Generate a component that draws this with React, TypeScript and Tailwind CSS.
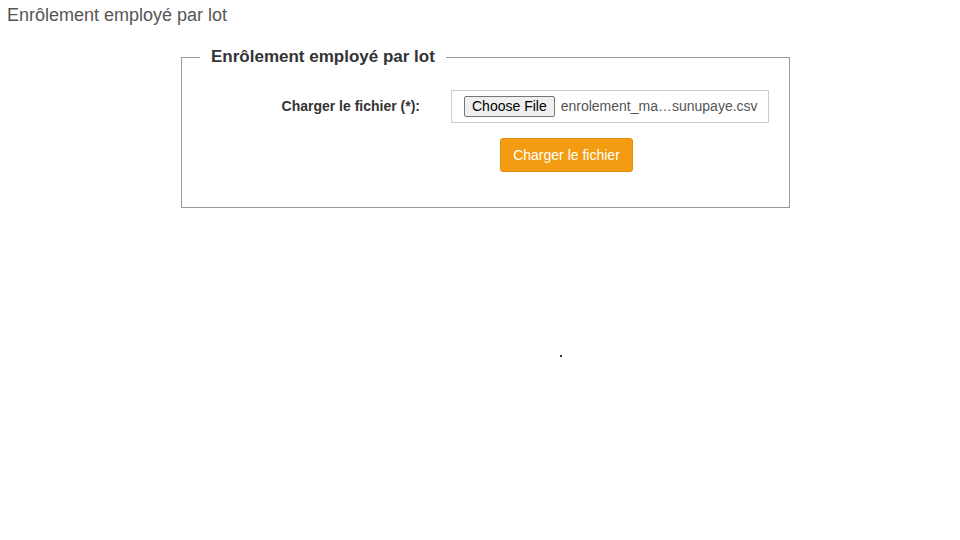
// Batch employee enrolment page: file picker inside a legend-titled fieldset.

const FONT = "font-['Liberation_Sans',Arial,sans-serif]";

function FakeFileInput({ fileName }: { readonly fileName: string }) {
    return (
        <div className="flex h-[33px] w-[318px] items-center border border-[#cccccc] bg-white pl-[12px]">
            <span className="flex h-[21px] items-center rounded-[2px] border border-[#767676] bg-[#efefef] px-[7px] text-[14px] text-black">
                Choose File
            </span>
            <span className="ml-[6px] text-[14px] text-[#555555]">{fileName}</span>
        </div>
    );
}

export default function App() {
    return (
        <div className={`${FONT} min-h-[540px] bg-white text-[#333333]`}>
            <h1 className="px-[7px] pt-[4px] text-[18px] leading-[22px] text-[#555555]">
                Enrôlement employé par lot
            </h1>

            <fieldset className="ml-[181px] mt-[20px] w-[609px] border border-[#999999] pl-[18px] pr-[19px] pb-[35px] pt-[22px]">
                <legend className="px-[11px] text-[17px] font-bold leading-[22px] text-[#333333]">
                    Enrôlement employé par lot
                </legend>

                <div className="flex items-center">
                    <label className="w-[220px] text-right text-[14px] font-bold text-[#333333]">
                        Charger le fichier (*):
                    </label>
                    <div className="ml-[31px]">
                        <FakeFileInput fileName="enrolement_ma…sunupaye.csv" />
                    </div>
                </div>

                <div className="mt-[15px] flex">
                    <button
                        type="button"
                        className="ml-[300px] h-[34px] w-[133px] rounded-[3px] border border-[#e08e0b] bg-[#f39c12] text-[14px] text-white"
                    >
                        Charger le fichier
                    </button>
                </div>
            </fieldset>

            {/* stray loading dot */}
            <div className="ml-[560px] mt-[147px] h-[2px] w-[2px] bg-[#333333]" />
        </div>
    );
}
